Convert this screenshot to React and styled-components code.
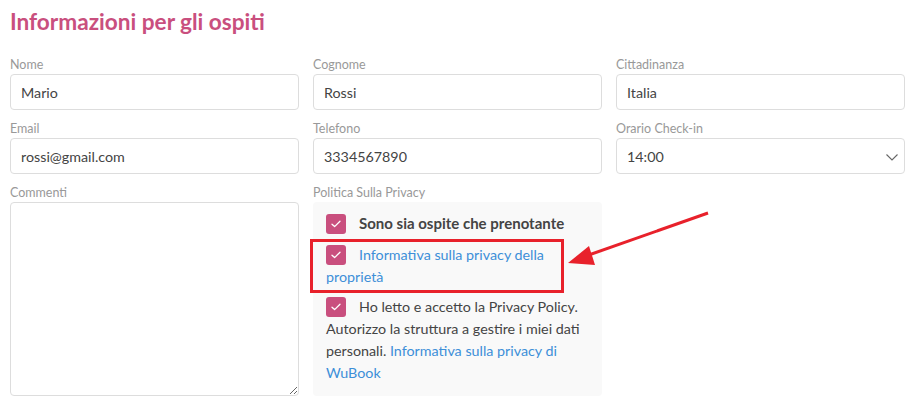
import React from "react";
import styled, { createGlobalStyle } from "styled-components";

const Global = createGlobalStyle`
  html, body { margin: 0; padding: 0; background: #fff; }
  body { font-family: Lato, "Noto Sans", sans-serif; color: #444; }
  * { box-sizing: border-box; }
`;

const Page = styled.div`
  position: relative;
  width: 914px;
  height: 411px;
  padding: 8px 10px 0 10px;
`;

const Title = styled.h2`
  margin: 0 0 21px 0;
  font-size: 22.6px;
  line-height: 28px;
  font-weight: 700;
  color: #c94f7e;
`;

const Grid = styled.div`
  display: grid;
  grid-template-columns: 289px 289px 289px;
  column-gap: 14px;
  row-gap: 11px;
`;

const Field = styled.div`
  display: flex;
  flex-direction: column;
`;

const Label = styled.label`
  font-size: 12.5px;
  line-height: 16px;
  color: #999;
  margin-bottom: 1px;
`;

const Input = styled.input`
  height: 36px;
  width: 100%;
  border: 1px solid #ddd;
  border-radius: 4px;
  padding: 0 10px;
  font-family: Lato, sans-serif;
  font-size: 14.3px;
  color: #444;
  background: #fff;
  outline: none;
`;

const SelectWrap = styled.div`
  position: relative;
`;

const Select = styled.select`
  appearance: none;
  height: 36px;
  width: 100%;
  border: 1px solid #ddd;
  border-radius: 4px;
  padding: 0 10px;
  font-family: Lato, sans-serif;
  font-size: 14.3px;
  color: #444;
  background: #fff;
  outline: none;
`;

const Chevron = styled.svg`
  position: absolute;
  right: 6px;
  top: 15px;
  pointer-events: none;
`;

const TextArea = styled.textarea`
  height: 194px;
  width: 100%;
  border: 1px solid #ddd;
  border-radius: 4px;
  padding: 8px 10px;
  font-family: Lato, sans-serif;
  font-size: 14.3px;
  resize: both;
  outline: none;
`;

const Panel = styled.div`
  height: 194px;
  background: #f9f9f9;
  border-radius: 4px;
  padding: 8px 12px 0 13px;
  display: flex;
  flex-direction: column;
  gap: 8px;
`;

const Item = styled.div`
  font-size: ${(p) => (p.$bold ? "15px" : "14.3px")};
  line-height: ${(p) => (p.$bold ? "26px" : "22px")};
  color: #444;
  font-weight: ${(p) => (p.$bold ? 700 : 400)};
`;

const Box = styled.span`
  display: inline-block;
  width: 20px;
  height: 20px;
  border-radius: 3px;
  background: #c94f7e;
  vertical-align: -5px;
  margin-right: 13px;
  svg { display: block; margin: 5px 0 0 4px; }
`;

const Link = styled.a`
  color: #3d8fd8;
  text-decoration: none;
  cursor: pointer;
`;

const Highlight = styled.div`
  position: absolute;
  left: 310px;
  top: 239px;
  width: 254px;
  height: 54px;
  border: 3px solid #e8212b;
  pointer-events: none;
`;

const Annot = styled.svg`
  position: absolute;
  left: 0;
  top: 0;
  pointer-events: none;
`;

const Check = () => (
  <Box>
    <svg width="12" height="10" viewBox="0 0 12 10">
      <path d="M2 5.2 L4.6 7.6 L10 2.2" fill="none" stroke="#fff" strokeWidth="1.3" strokeLinecap="round" strokeLinejoin="round" />
    </svg>
  </Box>
);

export default function App() {
  return (
    <>
      <Global />
      <Page>
        <Title>Informazioni per gli ospiti</Title>
        <Grid>
          <Field>
            <Label>Nome</Label>
            <Input defaultValue="Mario" />
          </Field>
          <Field>
            <Label>Cognome</Label>
            <Input defaultValue="Rossi" />
          </Field>
          <Field>
            <Label>Cittadinanza</Label>
            <Input defaultValue="Italia" />
          </Field>
          <Field>
            <Label>Email</Label>
            <Input defaultValue="rossi@gmail.com" />
          </Field>
          <Field>
            <Label>Telefono</Label>
            <Input defaultValue="3334567890" />
          </Field>
          <Field>
            <Label>Orario Check-in</Label>
            <SelectWrap>
              <Select defaultValue="14:00">
                <option>14:00</option>
                <option>15:00</option>
              </Select>
              <Chevron width="14" height="8" viewBox="0 0 14 8">
                <path d="M1.5 1.5 L7 7 L12.5 1.5" fill="none" stroke="#666" strokeWidth="1.1" />
              </Chevron>
            </SelectWrap>
          </Field>
          <Field>
            <Label>Commenti</Label>
            <TextArea />
          </Field>
          <Field>
            <Label>Politica Sulla Privacy</Label>
            <Panel>
              <Item $bold>
                <Check />
                Sono sia ospite che prenotante
              </Item>
              <Item>
                <Check />
                <Link>Informativa sulla privacy della proprietà</Link>
              </Item>
              <Item>
                <Check />
                Ho letto e accetto la Privacy Policy. Autorizzo la struttura a gestire i miei dati personali.{" "}
                <Link>Informativa sulla privacy di WuBook</Link>
              </Item>
            </Panel>
          </Field>
        </Grid>
        <Highlight />
        <Annot width="914" height="411" viewBox="0 0 914 411">
          <line x1="708" y1="213" x2="586" y2="256" stroke="#e8212b" strokeWidth="3" />
          <polygon points="568,263 589,246 595,265" fill="#e8212b" />
        </Annot>
      </Page>
    </>
  );
}
